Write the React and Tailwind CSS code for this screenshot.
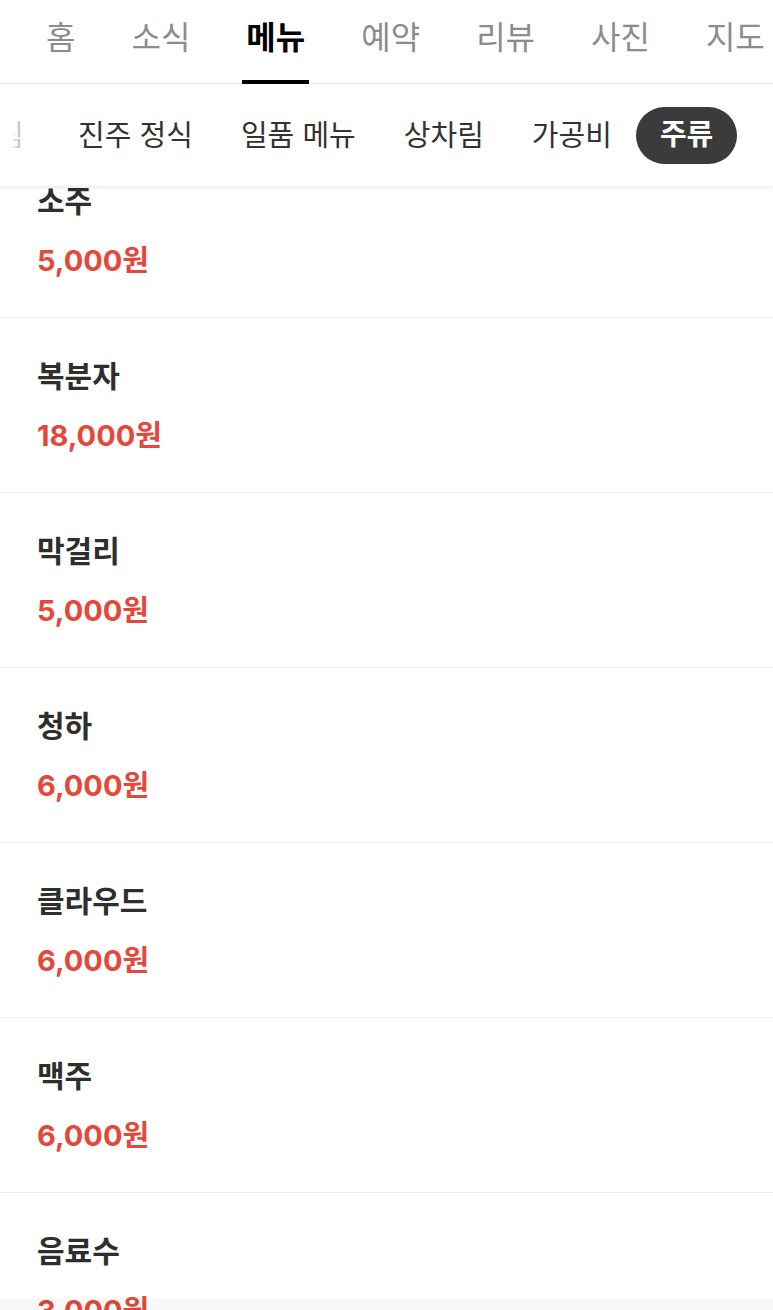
import React from 'react';

const font = { fontFamily: 'Inter, "Noto Sans CJK KR", sans-serif' };

const tabs = ['홈', '소식', '메뉴', '예약', '리뷰', '사진', '지도'];
const chips = ['진주 정식', '일품 메뉴', '상차림', '가공비', '주류'];

const drinks = [
  { name: '소주', price: '5,000원' },
  { name: '복분자', price: '18,000원' },
  { name: '막걸리', price: '5,000원' },
  { name: '청하', price: '6,000원' },
  { name: '클라우드', price: '6,000원' },
  { name: '맥주', price: '6,000원' },
  { name: '음료수', price: '3,000원' },
];

const App = () => {
  return (
    <div className="relative h-[1310px] w-[773px] overflow-hidden bg-white" style={font}>
      <div className="relative z-10 bg-white shadow-[0_2px_4px_rgba(0,0,0,0.08)]">
        {/* top tabs */}
        <div className="flex h-[84px] items-stretch border-b border-[#e6e6e6] pl-[18px] whitespace-nowrap">
          {tabs.map((t) => (
            <div key={t} className="relative flex shrink-0 items-center px-[28px] pb-[8px]">
              <span
                className={
                  t === '메뉴'
                    ? 'text-[32px] font-bold leading-none text-black'
                    : 'text-[32px] leading-none text-[#8c8c8c]'
                }
              >
                {t}
              </span>
              {t === '메뉴' && (
                <div className="absolute bottom-[-1px] left-[24px] right-[24px] h-[4px] bg-black" />
              )}
            </div>
          ))}
        </div>

        {/* category chips */}
        <div className="relative flex h-[102px] items-center whitespace-nowrap pl-[54px]">
          <div className="absolute left-0 top-0 h-full w-[40px] overflow-hidden">
            <span className="absolute left-[-3px] top-1/2 -translate-y-1/2 text-[29px] leading-none text-[#555]">
              림
            </span>
            <div className="absolute inset-y-0 left-0 w-[28px] bg-gradient-to-r from-white from-40% to-white/30" />
          </div>
          {chips.map((c) =>
            c === '주류' ? (
              <div
                key={c}
                className="flex h-[57px] shrink-0 items-center rounded-full bg-[#3b3b3b] px-[24px] text-[29px] font-bold text-white"
              >
                {c}
              </div>
            ) : (
              <div key={c} className="shrink-0 px-[24px] text-[29px] leading-none text-[#333]">
                {c}
              </div>
            )
          )}
        </div>
      </div>

      {/* menu list */}
      <div className="-mt-[43px]">
        {drinks.map((d) => (
          <div key={d.name} className="h-[175px] border-b border-[#ececec] px-[37px] pt-[40px]">
            <div className="h-[36px] text-[30px] font-bold leading-[36px] text-[#2e2e2e]">{d.name}</div>
            <div className="mt-[24px] h-[36px] text-[29px] font-bold leading-[36px] text-[#e5483b]">
              {d.price}
            </div>
          </div>
        ))}
      </div>

      <div className="absolute bottom-0 left-0 right-0 h-[11px] bg-black/[0.03]" />
    </div>
  );
};

export default App;
